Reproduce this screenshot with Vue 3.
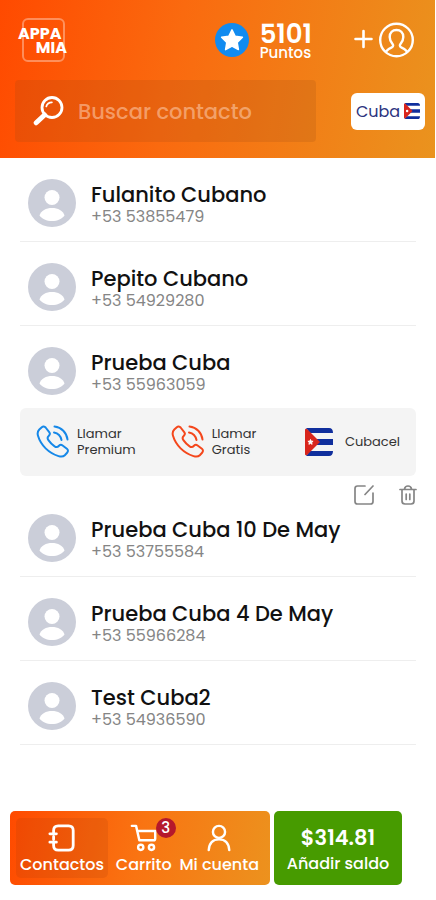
<template>
  <div class="app">
    <header class="header">
      <div class="top-bar">
        <a href="#" class="logo" aria-label="Appa Mia">
          <span class="logo-first">APPA</span>
          <span class="logo-second">MIA</span>
        </a>
        <div class="points">
          <svg class="points-star" viewBox="0 0 34 34">
            <circle cx="17" cy="17" r="17" fill="#118bf0" />
            <path d="M17 6.8l3.2 6.5 7.2 1-5.2 5.1 1.2 7.2-6.4-3.4-6.4 3.4 1.2-7.2-5.2-5.1 7.2-1z" fill="#fff" stroke="#fff" stroke-width="1.5" stroke-linejoin="round" />
          </svg>
          <div class="points-text">
            <strong>5101</strong>
            <span>Puntos</span>
          </div>
        </div>
        <button class="add-contact" aria-label="Añadir contacto">
          <svg viewBox="0 0 60 36" fill="none" stroke="#fff" stroke-linecap="round" stroke-linejoin="round">
            <path d="M1.5 17h16M9.5 9v16" stroke-width="2.6" />
            <circle cx="42.5" cy="18" r="16.3" stroke-width="2.4" />
            <path d="M32 29.500c1.500-2.300 3.500-3.300 5.800-4.200 1.700-.7 1.700-2.200.4-3.800-1.600-2-2.500-4.200-2.500-6.500 0-4.300 2.800-7 6.800-7s6.800 2.700 6.800 7c0 2.300-.9 4.500-2.500 6.500-1.300 1.600-1.300 3.100.4 3.800 2.300.9 4.300 1.900 5.800 4.200" stroke-width="2.4" />
          </svg>
        </button>
      </div>
      <div class="search-bar">
        <label class="search" for="search">
          <svg class="search-icon" viewBox="0 0 32 32" fill="none" stroke="#fff" stroke-linecap="round">
            <circle cx="19" cy="12.5" r="10" stroke-width="2.8" />
            <path d="M13.3 11.5c.6-2.500 2.700-4.200 5.600-4.200" stroke-width="1.7" />
            <path d="M11.5 20l-8.300 7.800" stroke-width="5" />
          </svg>
          <input id="search" v-model="search" type="text" placeholder="Buscar contacto" aria-label="Buscar contacto" />
        </label>
        <button class="country">
          Cuba
          <svg viewBox="0 0 28 28">
            <path d="M1 0h23q4 0 4 5H5zM8 11h20v6H8zM5 23h23q0 5-4 5H1z" fill="#102f9d" />
            <path d="M0 2q0-2 2-1l13 13L2 27q-2 1-2-1z" fill="#d8251c" />
            <circle cx="5.5" cy="14" r="2.2" fill="#fff" />
          </svg>
        </button>
      </div>
    </header>

    <main class="list">
      <section v-for="c in filtered" :key="c.phone">
        <div class="contact" :class="{ open: c.open }">
          <svg class="avatar" viewBox="0 0 48 48">
            <circle cx="24" cy="24" r="24" fill="#cbced9" />
            <circle cx="24" cy="18.5" r="7.5" fill="#fff" />
            <path d="M11.5 36.5c1.500-5 6.500-7.500 12.500-7.500s11 2.500 12.500 7.500c-2.500 3.500-7 5.500-12.500 5.500s-10-2-12.500-5.500z" fill="#fff" />
          </svg>
          <div class="contact-text">
            <h2>{{ c.name }}</h2>
            <p>{{ c.phone }}</p>
          </div>
        </div>
        <template v-if="c.open">
          <div class="actions">
            <button v-for="call in calls" :key="call.type" class="action" :class="call.class">
              <svg viewBox="0 0 34 34" fill="none" stroke="currentColor" stroke-width="2" stroke-linecap="round" stroke-linejoin="round">
                <path d="M3.3 4.5l2.500-2.300c1.200-1 2.800-.9 3.800.3l3.600 4.600c1 1.300.8 2.600-.3 3.600-1.700 1.500-1.700 2.800-.5 4.400 1.800 2.600 3.700 4.500 6.200 6.200 1.700 1.200 2.900 1.100 4.400-.5 1-1.100 2.400-1.200 3.600-.3l4.300 3.300c1.400 1.100 1.400 2.700.2 3.900l-2.300 2.500c-1.500 1.500-4 1.600-6.300.9C12.700 28 4.800 20.300 2 10.800c-.8-2.600-.2-4.700 1.300-6.300z" />
                <path d="M18 7.500c4 .8 6.700 3.500 7.500 7.500M18.500 1.500c7 .8 12.200 6 13 13" />
              </svg>
              <span>Llamar<br />{{ call.type }}</span>
            </button>
            <button class="action carrier">
              <svg viewBox="0 0 28 28">
                <path d="M1 0h23q4 0 4 5H5zM8 11h20v6H8zM5 23h23q0 5-4 5H1z" fill="#102f9d" />
                <path d="M0 2q0-2 2-1l13 13L2 27q-2 1-2-1z" fill="#d8251c" />
                <path d="M5.5 11.500l.7 1.700 1.900.1-1.500 1.200.5 1.800-1.600-1-1.600 1 .5-1.800-1.500-1.200 1.900-.1z" fill="#fff" stroke="#fff" />
              </svg>
              <span>Cubacel</span>
            </button>
          </div>
          <div class="tools">
            <button aria-label="Editar">
              <svg viewBox="0 0 20 20" fill="none" stroke="#858585" stroke-width="1.7" stroke-linecap="round">
                <path d="M11 1H3.500Q1 1 1 3.500v13Q1 19 3.500 19h13q2.500 0 2.500-2.500V8M11 9.500L19 1" />
              </svg>
            </button>
            <button aria-label="Eliminar">
              <svg viewBox="0 0 20 20" fill="none" stroke="#858585" stroke-width="1.7" stroke-linecap="round">
                <path d="M2 4.500h16M6.500 4Q7 1 10 1t3.500 3M4 5v11q0 3 3 3h6q3 0 3-3V5M8.200 9v5.500M11.800 9v5.500" />
              </svg>
            </button>
          </div>
        </template>
      </section>
    </main>

    <footer class="footer">
      <nav class="nav">
        <a href="#" class="active">
          <svg viewBox="0 0 30 30" fill="none" stroke="#fff" stroke-width="3" stroke-linecap="round" stroke-linejoin="round">
            <path d="M6 7q0-5 5-5h11q5 0 5 5v16q0 5-5 5H11q-5 0-5-5v-3.500M6 7v3.500M6 13.500v3M2 10.500h7M2 19.500h7" />
          </svg>
          Contactos
        </a>
        <a href="#">
          <span class="cart">
            <svg viewBox="0 0 30 30" fill="none" stroke="#fff" stroke-width="2.6" stroke-linecap="round" stroke-linejoin="round">
              <path d="M2 2h4.500L10 17.500h15.500q1.500 0 1.500-2V7.500H8" />
              <circle cx="11.5" cy="25" r="2.8" />
              <circle cx="23" cy="25" r="2.8" />
            </svg>
            <span class="badge">{{ cartCount }}</span>
          </span>
          Carrito
        </a>
        <a href="#">
          <svg viewBox="0 0 30 30" fill="none" stroke="#fff" stroke-width="2.6" stroke-linecap="round">
            <circle cx="15" cy="8.5" r="6.5" />
            <path d="M4 28c.5-7.500 4.500-11.500 11-11.500S25.500 20.500 26 28" />
          </svg>
          Mi cuenta
        </a>
      </nav>
      <button class="balance">
        <strong>$314.81</strong>
        <span>Añadir saldo</span>
      </button>
    </footer>
  </div>
</template>

<script setup>
import { ref, computed } from 'vue';

const search = ref('');
const cartCount = ref(3);

const calls = [
  { type: 'Premium', class: 'premium' },
  { type: 'Gratis', class: 'free' }
];

const contacts = ref([
  { name: 'Fulanito Cubano', phone: '+53 53855479' },
  { name: 'Pepito Cubano', phone: '+53 54929280' },
  { name: 'Prueba Cuba', phone: '+53 55963059', open: true },
  { name: 'Prueba Cuba 10 De May', phone: '+53 53755584' },
  { name: 'Prueba Cuba 4 De May', phone: '+53 55966284' },
  { name: 'Test Cuba2', phone: '+53 54936590' }
]);

const filtered = computed(() =>
  contacts.value.filter((c) => c.name.toLowerCase().includes(search.value.toLowerCase()))
);
</script>

<style>
body {
  background: #fff;
}
</style>

<style scoped>
.app {
  font-family: Poppins, Inter, sans-serif;
  color: #111;
}

.app *,
.app {
  box-sizing: border-box;
}

button {
  border: 0;
  padding: 0;
  background: none;
  font: inherit;
  color: inherit;
  cursor: pointer;
}

svg {
  display: block;
  flex: none;
}

.header {
  margin-right: 1px;
  padding: 18px 10px 16px 15px;
  background: linear-gradient(100deg, #ff4a00, #fa6a0f 40%, #ea931e);
}

.top-bar {
  display: flex;
  align-items: center;
  height: 44px;
  padding: 0 11px 0 7px;
}

.logo {
  display: flex;
  flex-direction: column;
  width: 43px;
  height: 44px;
  padding-top: 7px;
  border: 2px solid rgba(255, 255, 255, 0.35);
  border-radius: 6px;
  color: #fff;
  font-size: 16px;
  font-weight: 700;
  line-height: 14px;
  text-decoration: none;
}

/* El texto sobresale del marco por ambos lados */
.logo-first {
  margin-left: -6px;
}

.logo-second {
  align-self: flex-end;
  margin-right: -4px;
}

/* Puntos acumulados */
.points {
  display: flex;
  align-items: center;
  gap: 11px;
  margin-left: auto;
  color: #fff;
}

.points-star {
  width: 34px;
  height: 34px;
}

.points-text {
  display: flex;
  flex-direction: column;
  padding-top: 4px;
}

.points-text strong {
  font-size: 26px;
  font-weight: 600;
  line-height: 22px;
}

.points-text span {
  font-size: 15px;
  font-weight: 500;
  line-height: 16px;
}

.add-contact {
  margin-left: 42px;
}

.add-contact svg {
  width: 60px;
  height: 36px;
}

.search-bar {
  display: flex;
  align-items: center;
  gap: 35px;
  margin-top: 18px;
}

.search {
  display: flex;
  align-items: center;
  flex: 1;
  min-width: 0;
  height: 62px;
  padding: 0 16px 0 18px;
  gap: 13px;
  border-radius: 4px;
  background: rgba(150, 70, 20, 0.18);
}

.search-icon {
  width: 32px;
  height: 32px;
}

.search input {
  flex: 1;
  min-width: 0;
  padding: 0;
  border: 0;
  outline: 0;
  background: none;
  color: #fff;
  font: 500 21px Poppins, Inter, sans-serif;
}

.search input::placeholder {
  color: rgba(255, 210, 180, 0.55);
  opacity: 1;
}

.country {
  display: flex;
  align-items: center;
  justify-content: center;
  gap: 4px;
  width: 74px;
  height: 37px;
  border-radius: 6px;
  background: #fff;
  color: #2c3480;
  font-size: 16px;
}

.country svg {
  width: 16px;
  height: 16px;
}

/* Lista de contactos */
.list {
  padding: 0 20px;
}

.contact {
  display: flex;
  align-items: flex-start;
  gap: 15px;
  height: 84px;
  padding: 21px 8px 0;
  border-bottom: 1px solid #eee;
}

.contact.open {
  height: 82px;
  border-bottom: 0;
}

.avatar {
  width: 48px;
  height: 48px;
}

.contact-text {
  padding-top: 4px;
}

.contact-text h2 {
  margin: 0;
  font-size: 21px;
  font-weight: 500;
  line-height: 24px;
}

.contact-text p {
  margin: 0;
  color: #858585;
  font-size: 16px;
  line-height: 20px;
}

.actions {
  display: flex;
  align-items: center;
  gap: 35px;
  height: 68px;
  padding: 0 16px;
  border-radius: 6px;
  background: #f4f4f4;
}

.action {
  display: flex;
  align-items: center;
  gap: 7px;
  color: #333;
  font-size: 13px;
  line-height: 16px;
  text-align: left;
}

.action svg {
  width: 34px;
  height: 34px;
}

.premium svg {
  color: #1688e8;
}

.free svg {
  color: #f4471c;
}

.carrier {
  gap: 12px;
  margin-left: auto;
}

.carrier svg {
  width: 28px;
  height: 28px;
}

/* Los iconos invaden la fila siguiente */
.tools {
  display: flex;
  justify-content: flex-end;
  gap: 24px;
  margin-right: -2px;
  margin-bottom: -12px;
  padding-top: 9px;
}

.tools svg {
  width: 20px;
  height: 20px;
}

.footer {
  display: grid;
  grid-template-columns: 65fr 32fr;
  gap: 4px;
  margin-top: 66px;
  padding: 0 34px 15px 10px;
  color: #fff;
}

.nav {
  display: flex;
  justify-content: space-between;
  height: 74px;
  padding: 7px 11px 7px 6px;
  border-radius: 5px;
  background: linear-gradient(100deg, #ff4a00, #f97412 50%, #ec921e);
}

.nav a {
  display: flex;
  flex-direction: column;
  align-items: center;
  gap: 2px;
  padding-top: 6px;
  border-radius: 5px;
  color: #fff;
  font-size: 16px;
  font-weight: 500;
  line-height: 22px;
  text-decoration: none;
  white-space: nowrap;
}

.nav a.active {
  padding-left: 4px;
  padding-right: 4px;
  background: rgba(170, 60, 10, 0.18);
}

.nav svg {
  width: 28px;
  height: 28px;
}

.cart {
  position: relative;
}

.badge {
  position: absolute;
  top: -6px;
  right: -18px;
  width: 20px;
  height: 20px;
  border-radius: 50%;
  background: #b5182b;
  font-size: 15px;
  line-height: 20px;
  text-align: center;
}

.balance {
  display: flex;
  flex-direction: column;
  align-items: center;
  justify-content: center;
  height: 74px;
  padding-top: 4px;
  border-radius: 5px;
  background: #479b00;
  font-size: 16px;
  font-weight: 500;
  line-height: 24px;
  white-space: nowrap;
}

.balance strong {
  font-size: 21px;
  font-weight: 600;
  line-height: 28px;
}
</style>
